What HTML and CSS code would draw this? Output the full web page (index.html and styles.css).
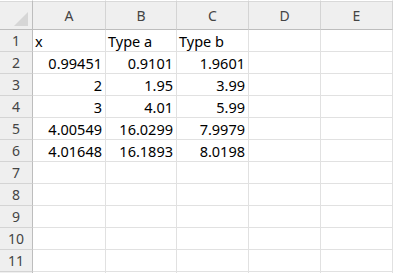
FILE: index.html
```html
<!DOCTYPE html>
<html>
<head>
<meta charset="utf-8">
<link rel="stylesheet" href="styles.css">
</head>
<body>
<div class="sheet">
  <div class="hdr corner"><span class="dot"></span><svg class="tri" width="15" height="15" viewBox="0 0 15 15"><polygon points="0,14 14,14 14,0" fill="#d6d6d6"/></svg></div>
  <div class="hdr col">A</div>
  <div class="hdr col">B</div>
  <div class="hdr col">C</div>
  <div class="hdr col">D</div>
  <div class="hdr col last">E</div>

  <div class="rh">1</div><div class="c">x</div><div class="c">Type a</div><div class="c">Type b</div><div class="c"></div><div class="c"></div>
  <div class="rh">2</div><div class="c n">0.99451</div><div class="c n">0.9101</div><div class="c n">1.9601</div><div class="c"></div><div class="c"></div>
  <div class="rh">3</div><div class="c n">2</div><div class="c n">1.95</div><div class="c n">3.99</div><div class="c"></div><div class="c"></div>
  <div class="rh">4</div><div class="c n">3</div><div class="c n">4.01</div><div class="c n">5.99</div><div class="c"></div><div class="c"></div>
  <div class="rh">5</div><div class="c n">4.00549</div><div class="c n">16.0299</div><div class="c n">7.9979</div><div class="c"></div><div class="c"></div>
  <div class="rh">6</div><div class="c n">4.01648</div><div class="c n">16.1893</div><div class="c n">8.0198</div><div class="c"></div><div class="c"></div>
  <div class="rh">7</div><div class="c"></div><div class="c"></div><div class="c"></div><div class="c"></div><div class="c"></div>
  <div class="rh">8</div><div class="c"></div><div class="c"></div><div class="c"></div><div class="c"></div><div class="c"></div>
  <div class="rh">9</div><div class="c"></div><div class="c"></div><div class="c"></div><div class="c"></div><div class="c"></div>
  <div class="rh">10</div><div class="c"></div><div class="c"></div><div class="c"></div><div class="c"></div><div class="c"></div>
  <div class="rh">11</div><div class="c"></div><div class="c"></div><div class="c"></div><div class="c"></div><div class="c"></div>
  <div class="rh stub"></div><div class="c stub"></div><div class="c stub"></div><div class="c stub"></div><div class="c stub"></div><div class="c stub"></div>
</div>
</body>
</html>
```
FILE: styles.css
```css
html, body {
  margin: 0;
  padding: 0;
  background: #ffffff;
  overflow: hidden;
}
body {
  width: 393px;
  height: 273px;
  font-family: "Noto Sans", "Open Sans", sans-serif;
  font-size: 14.5px;
  color: #000000;
}
.sheet {
  display: grid;
  grid-template-columns: 33px 73px 71px 72px 72px 72px;
  grid-template-rows: 30px repeat(11, 22px) 1px;
  width: 393px;
}
.sheet > div {
  box-sizing: border-box;
  overflow: hidden;
  white-space: nowrap;
}
.hdr {
  background: #efefef;
  border-top: 1px solid #ffffff;
  box-shadow: inset 0 1px 0 #d9d9d9;
  border-bottom: 1px solid #bdbdbd;
  color: #444444;
  font-size: 14px;
}
.corner {
  position: relative;
  border-right: 1px solid #bdbdbd;
  display: flex;
  justify-content: flex-end;
  align-items: flex-end;
  padding: 0 3px 2px 0;
}
.dot {
  position: absolute;
  left: 32px;
  top: 6px;
  width: 1px;
  height: 2px;
  background: #222222;
}
.col {
  border-right: 1px solid #d4d4d4;
  display: flex;
  align-items: center;
  justify-content: center;
  padding-top: 1px;
}
.col.last {
  border-right-color: #d4d4d4;
}
.rh {
  background: #efefef;
  border-right: 1px solid #bdbdbd;
  border-bottom: 1px solid #d4d4d4;
  color: #444444;
  font-size: 14px;
  display: flex;
  align-items: center;
  justify-content: center;
}
.c {
  border-right: 1px solid #e1e1e1;
  border-bottom: 1px solid #e1e1e1;
  display: flex;
  align-items: center;
  padding: 0 3px 0 2px;
}
.c.n {
  justify-content: flex-end;
}
.stub {
  border-bottom: none;
}
```
